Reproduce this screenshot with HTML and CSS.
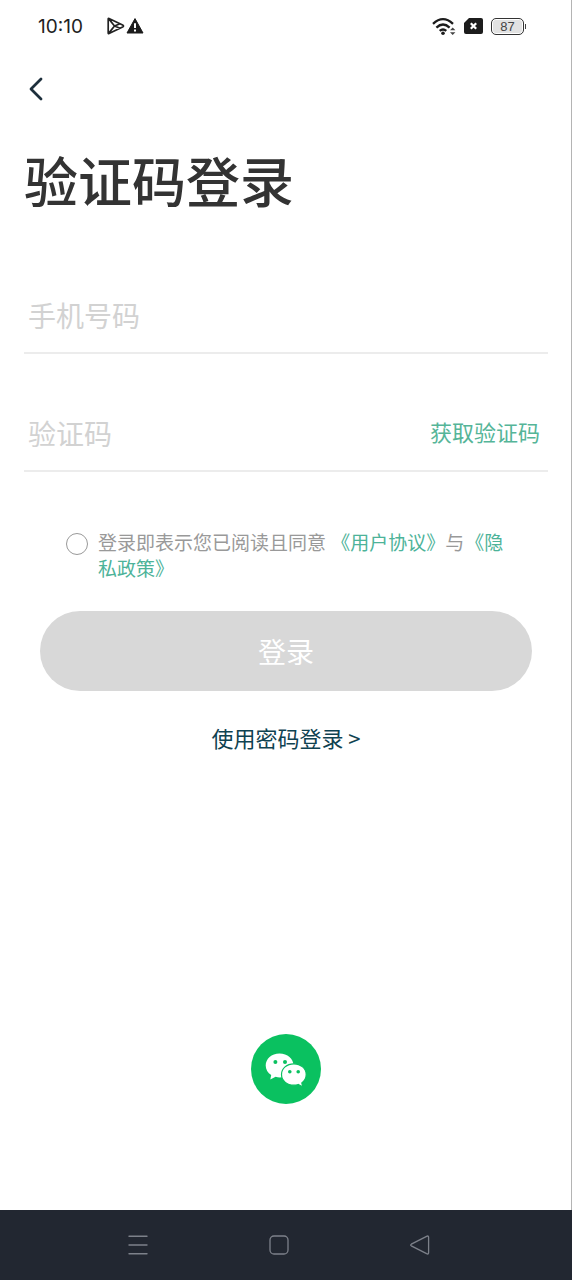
FILE: index.html
```html
<!DOCTYPE html>
<html lang="zh-CN">
<head>
<meta charset="utf-8">
<meta name="viewport" content="width=device-width, initial-scale=1">
<title>验证码登录</title>
<link rel="stylesheet" href="styles.css">
</head>
<body>
<div class="screen">
  <div class="status">
    <div class="status-left">
      <span class="clock">10:10</span>
      <div class="status-icons">
        <svg width="18" height="18" viewBox="0 0 18 18" fill="none" stroke="#222" stroke-width="1.7" stroke-linejoin="round" aria-hidden="true"><path d="M2 1.4Q1.2 1 1.2 2V16Q1.2 17 2 16.6L15.6 10Q17.4 9 15.6 8ZM1.6 1.6L7.5 9L13 11.3M1.6 16.4L7.5 9L13 6.7"/></svg>
        <svg width="18" height="18" viewBox="0 0 18 18" aria-hidden="true"><path d="M9 1.6L17 16H1Z" fill="#1c1c1c" stroke="#1c1c1c" stroke-linejoin="round"/><path d="M9 6.2V11M9 12.6V14.4" stroke="#fff" stroke-width="2"/></svg>
      </div>
    </div>
    <div class="status-right">
      <svg width="24" height="19" viewBox="0 0 24 19" fill="none" stroke="#1c1c1c" stroke-width="2.3" aria-hidden="true"><path d="M1 6.8Q11 -2.6 21 6.8M4.4 10.6Q11 4.4 17.6 10.6M7.7 13.9Q11 11 14.3 13.9"/><circle cx="11" cy="16.3" r="1.8" fill="#1c1c1c" stroke="none"/><path d="M18 13.2L20.7 10.4L23.4 13.2ZM18 15.2L20.7 18L23.4 15.2Z" fill="#444" stroke="none"/></svg>
      <svg width="19" height="16" viewBox="0 0 19 16" aria-hidden="true"><path d="M5 0H17Q19 0 19 2V14Q19 16 17 16H2Q0 16 0 14V5Z" fill="#1c1c1c"/><path d="M6.8 5.2L12.2 10.8M12.2 5.2L6.8 10.8" stroke="#fff" stroke-width="2.2"/></svg>
      <div class="battery"><span class="battery-body">87</span><span class="battery-tip"></span></div>
    </div>
  </div>

  <main class="content">
    <button class="back" type="button" aria-label="返回">
      <svg width="16" height="24" viewBox="0 0 16 24" fill="none" stroke="#1d2f3c" stroke-width="2.8" stroke-linecap="round" stroke-linejoin="round" aria-hidden="true"><path d="M13 2L3 12L13 22"/></svg>
    </button>
    <h1 class="title">验证码登录</h1>

    <form class="form">
      <div class="field">
        <input class="field-input" type="tel" placeholder="手机号码" aria-label="手机号码">
      </div>
      <div class="field">
        <input class="field-input" type="text" inputmode="numeric" placeholder="验证码" aria-label="验证码">
        <button class="get-code" type="button">获取验证码</button>
      </div>
      <div class="agree">
        <input class="agree-check" id="agree" type="checkbox">
        <label class="agree-text" for="agree">登录即表示您已阅读且同意 <a class="agree-link" href="#terms">《用户协议》</a>与<a class="agree-link" href="#privacy">《隐私政策》</a></label>
      </div>
      <button class="submit" type="submit">登录</button>
    </form>
    <a class="password-link" href="#password">使用密码登录 &gt;</a>

    <button class="wechat" type="button" aria-label="微信登录">
      <svg width="70" height="70" viewBox="0 0 70 70" aria-hidden="true">
        <circle cx="35" cy="35" r="35" fill="#0ac160"/>
        <path d="M28.5 19.5C20.5 19.5 14.7 25 14.7 31.6C14.7 35.5 16.8 38.9 20.2 41.1L19.3 45.6L24.6 42.8C25.9 43.2 27.3 43.4 28.7 43.4C36.5 43.4 42.5 38 42.5 31.4C42.5 25 36.5 19.5 28.5 19.5Z" fill="#fff"/>
        <path d="M42.8 29.8C35.8 29.8 30.5 34.5 30.5 40.5S35.8 51.2 42.8 51.2C44.3 51.2 45.8 51 47.2 50.5L51.8 53L50.8 48.9C53.6 46.9 55.2 43.8 55.2 40.5C55.2 34.5 49.8 29.8 42.8 29.8Z" fill="#fff" stroke="#0ac160" stroke-width="1.2"/>
        <g fill="#0ac160"><circle cx="24.4" cy="28" r="2"/><circle cx="34" cy="28" r="2"/><circle cx="38.8" cy="37.8" r="1.8"/><circle cx="47.2" cy="37.8" r="1.8"/></g>
      </svg>
    </button>
  </main>

  <nav class="navbar">
    <button class="nav-button" type="button" aria-label="最近任务"><svg width="22" height="22" viewBox="0 0 22 22" fill="none" stroke="#7d818a" stroke-width="1.4" stroke-linecap="round"><path d="M2 2.3H20M2 11H20M2 19.7H20"/></svg></button>
    <button class="nav-button" type="button" aria-label="主页"><svg width="22" height="22" viewBox="0 0 22 22" fill="none" stroke="#7d818a" stroke-width="1.3"><rect x="2" y="2" width="18" height="18" rx="4"/></svg></button>
    <button class="nav-button" type="button" aria-label="返回上一页"><svg width="22" height="22" viewBox="0 0 22 22" fill="none" stroke="#7d818a" stroke-width="1.3" stroke-linejoin="round"><path d="M2.3 10.2L17.6 2.3Q19.6 1.4 19.6 3.4V18.6Q19.6 20.6 17.6 19.7L2.3 11.8Q1 11 2.3 10.2Z"/></svg></button>
  </nav>
</div>
</body>
</html>
```

FILE: styles.css
```css
* {
  box-sizing: border-box;
}

body {
  margin: 0;
  background: #fff;
  font-family: "Noto Sans CJK SC", sans-serif;
}

button {
  padding: 0;
  border: 0;
  background: none;
  font-family: inherit;
  cursor: pointer;
}

svg {
  display: block;
}

a {
  text-decoration: none;
}

.screen {
  display: flex;
  flex-direction: column;
  min-height: 100vh;
}

.status {
  display: flex;
  justify-content: space-between;
  align-items: center;
  height: 52px;
  padding: 0 45px 0 38px;
  border-right: 1px solid #b4b4b4;
}

.status-left {
  display: flex;
  align-items: center;
  gap: 24px;
}

.clock {
  padding-top: 2px;
  font-family: Inter, sans-serif;
  font-size: 19px;
  line-height: 24px;
  color: #222;
}

.status-icons {
  display: flex;
  gap: 1px;
}

.status-right {
  display: flex;
  align-items: center;
  gap: 8px;
}

.battery {
  display: flex;
  align-items: center;
  gap: 1px;
}

.battery-body {
  width: 33px;
  height: 17px;
  border: 1px solid #333;
  border-radius: 5px;
  background: #e2e2e2;
  box-shadow: inset 0 0 0 1px #fff;
  font-family: "Liberation Sans", sans-serif;
  font-size: 13px;
  line-height: 16px;
  text-align: center;
  color: #444;
}

.battery-tip {
  width: 1px;
  height: 5px;
  background: #444;
}

.content {
  display: flex;
  flex: 1;
  flex-direction: column;
  padding: 20px 23px 0 24px;
  border-right: 1px solid #b4b4b4;
}

.back {
  align-self: flex-start;
  padding: 5px 4px;
}

.title {
  margin: 36px 0 0;
  font-size: 54px;
  font-weight: 500;
  line-height: 76px;
  color: #333;
}

.form {
  display: flex;
  flex-direction: column;
  margin-top: 60px;
}

.field {
  display: flex;
  align-items: center;
  height: 76px;
  margin-bottom: 42px;
  padding: 0 8px 0 4px;
  border-bottom: 2px solid #ececec;
}

.field-input {
  flex: 1;
  min-width: 0;
  padding: 0;
  border: 0;
  outline: 0;
  background: none;
  font-family: inherit;
  font-size: 28px;
  line-height: 40px;
  color: #333;
}

.field-input::placeholder {
  color: #d2d2d2;
  opacity: 1;
}

.get-code {
  padding-bottom: 4px;
  font-size: 22px;
  line-height: 32px;
  color: #55b598;
}

.agree {
  display: flex;
  align-items: flex-start;
  gap: 10px;
  margin: 15px 42px 0;
}

.agree-check {
  flex: none;
  width: 22px;
  height: 22px;
  margin: 4px 0 0;
  border: 1px solid #999;
  border-radius: 50%;
  appearance: none;
}

.agree-check:checked {
  border: 6px solid #55b598;
}

.agree-text {
  font-size: 19px;
  line-height: 26px;
  color: #999;
}

.agree-link {
  margin-left: 1px;
  color: #4db399;
}

.submit {
  height: 80px;
  margin: 30px 16px 0;
  border-radius: 40px;
  background: #d8d8d8;
  font-size: 28px;
  color: #fff;
}

.password-link {
  align-self: center;
  margin-top: 30px;
  font-size: 22px;
  line-height: 32px;
  color: #0f4251;
}

.wechat {
  align-self: center;
  margin: auto 0 106px;
  border-radius: 50%;
}

.navbar {
  display: flex;
  justify-content: center;
  align-items: center;
  gap: 119px;
  height: 70px;
  padding-right: 14px;
  background: #222731;
}
```
